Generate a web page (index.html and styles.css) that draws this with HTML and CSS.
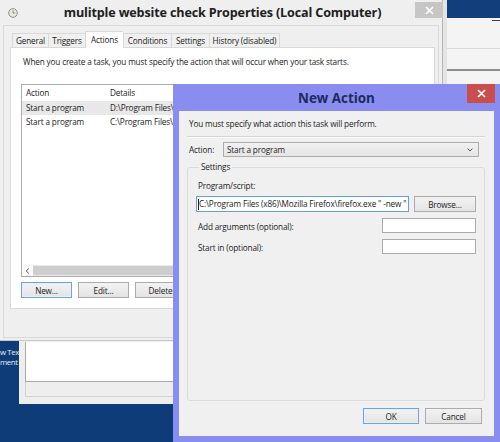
FILE: index.html
```html
<!DOCTYPE html>
<html>
<head>
<meta charset="utf-8">
<title>New Action</title>
<link rel="stylesheet" href="styles.css">
</head>
<body>
<div class="desktop">
  <div class="desk-label"><div>w Tex</div><div>ment</div></div>

  <div class="win win-back">
    <div class="back-bar"></div>
    <div class="back-min"></div>
    <div class="back-sep1"></div>
    <div class="back-sep2"></div>
  </div>

  <div class="win win-low">
    <div class="low-field"></div>
    <div class="low-strip"></div>
  </div>

  <div class="win props">
    <div class="titlebar">
      <svg class="app-icon" width="10" height="10" viewBox="0 0 10 10">
        <circle cx="5" cy="5" r="4.3" fill="#ecebd8" stroke="#8d8d8d" stroke-width="1"/>
        <path d="M5 2.4V5H7.2" fill="none" stroke="#7a7a7a" stroke-width="0.9"/>
      </svg>
      <div class="title">mulitple website check Properties (Local Computer)</div>
      <div class="close close-gray">
        <svg width="9" height="9" viewBox="0 0 9 9"><path d="M1 1L8 8M8 1L1 8" stroke="#fff" stroke-width="1.6"/></svg>
      </div>
    </div>
    <div class="pclient">
      <div class="tabs">
        <div class="tab t-general">General</div>
        <div class="tab t-triggers">Triggers</div>
        <div class="tab t-actions active">Actions</div>
        <div class="tab t-conditions">Conditions</div>
        <div class="tab t-settings">Settings</div>
        <div class="tab t-history">History (disabled)</div>
      </div>
      <div class="panel">
        <p class="intro">When you create a task, you must specify the action that will occur when your task starts.</p>
        <div class="list">
          <div class="lrow head"><span class="c1">Action</span><span class="c2">Details</span></div>
          <div class="lrow sel"><span class="c1">Start a program</span><span class="c2">D:\Program Files\</span></div>
          <div class="lrow"><span class="c1">Start a program</span><span class="c2">C:\Program Files\</span></div>
          <div class="lspace"></div>
          <div class="hscroll">
            <span class="sarrow">
              <svg width="5" height="6" viewBox="0 0 5 6"><path d="M3.8 0.6L1.2 3L3.8 5.4" fill="none" stroke="#555" stroke-width="1"/></svg>
            </span>
            <span class="sthumb"></span>
          </div>
        </div>
        <div class="btns">
          <button class="btn default">New...</button>
          <button class="btn">Edit...</button>
          <button class="btn">Delete</button>
        </div>
      </div>
    </div>
  </div>

  <div class="win dlg">
    <div class="dtitle">
      <span>New Action</span>
      <div class="close close-red">
        <svg width="9" height="9" viewBox="0 0 9 9"><path d="M1 1L8 8M8 1L1 8" stroke="#fff" stroke-width="1.6"/></svg>
      </div>
    </div>
    <div class="client">
      <div class="desc">You must specify what action this task will perform.</div>
      <div class="sep"></div>
      <div class="action-row">
        <span class="action-label">Action:</span>
        <div class="combo">
          <span>Start a program</span>
          <svg width="6" height="4" viewBox="0 0 6 4"><path d="M0.6 0.6L3 3L5.4 0.6" fill="none" stroke="#555" stroke-width="1"/></svg>
        </div>
      </div>
      <fieldset class="group">
        <legend>Settings</legend>
        <div class="flabel">Program/script:</div>
        <div class="prog-row">
          <div class="tbox focus"><span class="caret"></span>C:\Program Files (x86)\Mozilla Firefox\firefox.exe " -new "</div>
          <button class="btn browse">Browse...</button>
        </div>
        <div class="opt-row">
          <span class="olabel">Add arguments (optional):</span>
          <div class="tbox small"></div>
        </div>
        <div class="opt-row">
          <span class="olabel">Start in (optional):</span>
          <div class="tbox small"></div>
        </div>
      </fieldset>
      <div class="dbtns">
        <button class="btn default dbtn">OK</button>
        <button class="btn dbtn cancel">Cancel</button>
      </div>
    </div>
  </div>
</div>
</body>
</html>
```

FILE: styles.css
```css
* { box-sizing: border-box; }

body {
  margin: 0;
  width: 500px;
  height: 442px;
  overflow: hidden;
  background: #0e3c78;
  font-family: "Open Sans", "Noto Sans", sans-serif;
  font-size: 8.2px;
  letter-spacing: -0.15px;
  color: #1b1b1b;
}

.desktop {
  position: relative;
  width: 500px;
  height: 442px;
  overflow: hidden;
}

.win { position: absolute; }

/* desktop icon labels peeking out on the left */
.desk-label {
  position: absolute;
  left: 0;
  top: 347px;
  color: #e8eef8;
  font-size: 7.8px;
  letter-spacing: -0.4px;
  line-height: 10px;
  white-space: nowrap;
}

/* window far behind, right edge */
.win-back {
  left: 443px;
  top: 0;
  width: 57px;
  height: 418px;
  background: #f4f4f4;
  border-left: 4px solid #e4e4e4;
}
.back-bar { height: 18px; background: #123f7c; }
.back-min { margin: 2px 0 0 45px; width: 8px; height: 1px; background: #444; }
.back-sep1 { margin-top: 27px; height: 1px; background: #dadada; }
.back-sep2 { margin-top: 20px; height: 2px; background: #8d8d8d; }

/* window below the properties window */
.win-low {
  left: 19px;
  top: 339px;
  width: 170px;
  height: 65px;
  background: #eeeeee;
  padding: 3px 0 0 6px;
}
.low-field {
  height: 40px;
  background: #fff;
  border-left: 1px solid #a9a9a9;
  border-bottom: 1px solid #a9a9a9;
}
.low-strip {
  height: 15px;
  border-left: 1px solid #d2d2d2;
  border-bottom: 1px solid #d2d2d2;
}

/* properties window */
.props {
  left: 0;
  top: 0;
  width: 443px;
  height: 341px;
  background: #efefef;
  border-right: 1px solid #b7b7b7;
  border-bottom: 1px solid #c9c9c9;
  padding: 0 3px 3px 3px;
}
.titlebar {
  position: relative;
  height: 25px;
  display: flex;
  align-items: center;
  justify-content: center;
}
.app-icon { position: absolute; left: 5px; top: 8px; }
.title {
  font-weight: bold;
  font-size: 12.6px;
  color: #202020;
  margin-left: 3px;
  letter-spacing: -0.15px;
}
.close {
  position: absolute;
  display: flex;
  align-items: center;
  justify-content: center;
}
.close-gray {
  right: -4px;
  top: 2px;
  width: 28px;
  height: 16px;
  background: #c6c6c6;
}

.pclient {
  height: 313px;
  border: 1px solid #dadada;
  padding: 5px 0 0 6px;
}

.tabs {
  display: flex;
  align-items: flex-end;
  height: 16px;
  margin-left: 2px;
  position: relative;
  z-index: 1;
}
.tab {
  height: 14px;
  border: 1px solid #d9d9d9;
  border-bottom: none;
  border-right: none;
  background: #f0f0f0;
  text-align: center;
  line-height: 13px;
  white-space: nowrap;
}
.t-general { width: 36px; }
.t-triggers { width: 37px; }
.t-actions { width: 38px; }
.t-conditions { width: 48px; }
.t-settings { width: 38px; }
.t-history { width: 71px; border-right: 1px solid #d9d9d9; }
.tab.active {
  height: 17px;
  background: #fff;
  margin-bottom: -1px;
  line-height: 15px;
}

.panel {
  width: 425px;
  height: 262px;
  background: #fff;
  border: 1px solid #d9d9d9;
  padding: 8px 0 0 10px;
}
.intro {
  margin: 0 0 0 2px;
  line-height: 12px;
  white-space: nowrap;
}
.list {
  margin-top: 16px;
  width: 403px;
  height: 193px;
  border: 1px solid #ababab;
  display: flex;
  flex-direction: column;
  overflow: hidden;
}
.lrow {
  display: flex;
  height: 14px;
  line-height: 13px;
  padding-left: 4px;
  white-space: nowrap;
}
.lrow.head { height: 16px; line-height: 16px; }
.lrow.sel { background: #e8e8e8; }
.c1 { width: 84px; flex: none; }
.lspace { flex: 1; }
.hscroll {
  height: 11px;
  display: flex;
  background: #e9e9e9;
}
.sarrow {
  width: 11px;
  display: flex;
  align-items: center;
  justify-content: center;
  background: #fafafa;
}
.sthumb {
  flex: 1;
  margin: 1px 0;
  background: #cdcdcd;
}

.btn {
  font-family: inherit;
  font-size: 8.2px;
  letter-spacing: -0.15px;
  color: #1b1b1b;
  height: 16px;
  padding: 0;
  border: 1px solid #acacac;
  background: linear-gradient(#f2f2f2, #e4e4e4);
  line-height: 13px;
}
.btn.default {
  border-color: #6aa6dc;
  box-shadow: inset 0 0 0 1px #e6f0fa;
}
.btns {
  display: flex;
  gap: 6px;
  margin-top: 5px;
}
.btns .btn { width: 51px; }

/* New Action dialog */
.dlg {
  left: 173px;
  top: 84px;
  width: 327px;
  height: 358px;
  background: #8a8df0;
  padding: 0 6px 6px 6px;
  display: flex;
  flex-direction: column;
}
.dtitle {
  position: relative;
  height: 27px;
  flex: none;
  display: flex;
  align-items: center;
  justify-content: center;
  font-weight: bold;
  font-size: 13.4px;
  letter-spacing: 0;
  color: #1d2a5c;
}
.close-red {
  right: -1px;
  top: 0;
  width: 28px;
  height: 19px;
  background: #c94f4f;
}
.client {
  flex: 1;
  background: #f0f0f0;
  padding: 0 9px 12px 8px;
  display: flex;
  flex-direction: column;
}
.desc {
  margin: 7px 0 0 2px;
  line-height: 12px;
}
.sep {
  margin-top: 6px;
  height: 2px;
  border-top: 1px solid #d5d5d5;
  border-bottom: 1px solid #fbfbfb;
}
.action-row {
  display: flex;
  align-items: center;
  margin-top: 4px;
  height: 15px;
}
.action-label { width: 36px; padding-left: 2px; }
.combo {
  width: 256px;
  height: 15px;
  border: 1px solid #acacac;
  background: linear-gradient(#f0f0f0, #e6e6e6);
  display: flex;
  align-items: center;
  justify-content: space-between;
  padding: 0 5px 0 3px;
}

.group {
  flex: 1;
  margin: 4px 0 0 0;
  padding: 7px 8px 0 8px;
  border: 1px solid #dcdcdc;
  border-radius: 3px;
  min-width: 0;
}
.group legend {
  padding: 0 2px;
  margin-left: 3px;
  line-height: 12px;
}
.flabel {
  line-height: 12px;
  padding-left: 2px;
}
.prog-row {
  display: flex;
  gap: 5px;
  margin-top: 4px;
}
.tbox {
  height: 16px;
  background: #fff;
  border: 1px solid #ababab;
  line-height: 14px;
  white-space: nowrap;
  overflow: hidden;
}
.tbox.focus {
  width: 213px;
  border-color: #5fa0e0;
  padding-left: 1px;
  display: flex;
  align-items: center;
}
.caret {
  width: 1px;
  height: 11px;
  background: #222;
  flex: none;
}
.browse { width: 62px; }
.opt-row {
  display: flex;
  justify-content: space-between;
  align-items: center;
  margin-top: 6px;
}
.olabel { padding-left: 2px; padding-top: 2px; }
.tbox.small { width: 94px; height: 15px; }

.dbtns {
  display: flex;
  justify-content: flex-end;
  gap: 6px;
  margin-top: 7px;
  padding-right: 3px;
}
.dbtn { width: 56px; }
.dbtn.cancel { width: 57px; }
```
